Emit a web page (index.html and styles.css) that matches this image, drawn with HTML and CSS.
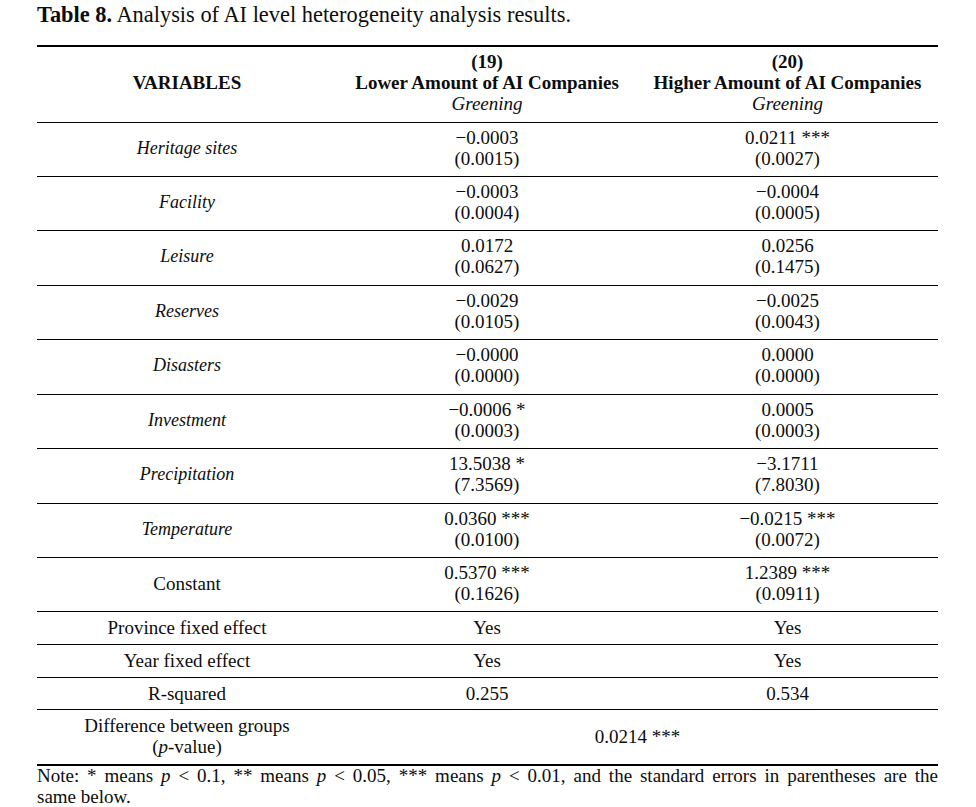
FILE: index.html
```html
<!DOCTYPE html>
<html lang="en">
<head>
<meta charset="utf-8">
<title>Table 8</title>
<link rel="stylesheet" href="styles.css">
</head>
<body>
<div class="page">
  <p class="caption"><b>Table 8.</b> Analysis of AI level heterogeneity analysis results.</p>
  <table class="results">
    <colgroup><col class="c1"><col class="c2"><col class="c3"></colgroup>
    <thead>
      <tr>
        <th class="var">VARIABLES</th>
        <th>(19)<br>Lower Amount of AI Companies<br><i class="dep">Greening</i></th>
        <th>(20)<br>Higher Amount of AI Companies<br><i class="dep">Greening</i></th>
      </tr>
    </thead>
    <tbody>
      <tr class="pair"><td class="lab">Heritage sites</td><td>−0.0003<br>(0.0015)</td><td>0.0211 ***<br>(0.0027)</td></tr>
      <tr class="pair"><td class="lab">Facility</td><td>−0.0003<br>(0.0004)</td><td>−0.0004<br>(0.0005)</td></tr>
      <tr class="pair tall"><td class="lab">Leisure</td><td>0.0172<br>(0.0627)</td><td>0.0256<br>(0.1475)</td></tr>
      <tr class="pair"><td class="lab">Reserves</td><td>−0.0029<br>(0.0105)</td><td>−0.0025<br>(0.0043)</td></tr>
      <tr class="pair tall"><td class="lab">Disasters</td><td>−0.0000<br>(0.0000)</td><td>0.0000<br>(0.0000)</td></tr>
      <tr class="pair"><td class="lab">Investment</td><td>−0.0006 *<br>(0.0003)</td><td>0.0005<br>(0.0003)</td></tr>
      <tr class="pair tall"><td class="lab">Precipitation</td><td>13.5038 *<br>(7.3569)</td><td>−3.1711<br>(7.8030)</td></tr>
      <tr class="pair"><td class="lab">Temperature</td><td>0.0360 ***<br>(0.0100)</td><td>−0.0215 ***<br>(0.0072)</td></tr>
      <tr class="pair"><td>Constant</td><td>0.5370 ***<br>(0.1626)</td><td>1.2389 ***<br>(0.0911)</td></tr>
      <tr class="single"><td>Province fixed effect</td><td>Yes</td><td>Yes</td></tr>
      <tr class="single"><td>Year fixed effect</td><td>Yes</td><td>Yes</td></tr>
      <tr class="single short"><td>R-squared</td><td>0.255</td><td>0.534</td></tr>
      <tr class="diff"><td>Difference between groups<br>(<i>p</i>-value)</td><td colspan="2">0.0214 ***</td></tr>
    </tbody>
  </table>
  <div class="note">
    <span class="note-line">Note: * means <i>p</i> &lt; 0.1, ** means <i>p</i> &lt; 0.05, *** means <i>p</i> &lt; 0.01, and the standard errors in parentheses are the</span>
    <span class="note-last">same below.</span>
  </div>
</div>
</body>
</html>
```
FILE: styles.css
```css
html, body {
  margin: 0;
  padding: 0;
  background: #ffffff;
}

.page {
  width: 901px;
  padding-left: 37px;
  font-family: "Liberation Serif", "Times New Roman", serif;
  color: #0d0d0d;
}

.caption {
  margin: 0 0 17px 0;
  padding-top: 2px;
  font-size: 22.4px;
  line-height: 26px;
  white-space: nowrap;
}

.results {
  width: 901px;
  border-collapse: separate;
  border-spacing: 0;
  border-top: 2px solid #000;
  table-layout: fixed;
  font-size: 19px;
}

.c1, .c2 { width: 300px; }
.c3 { width: 301px; }

.results th,
.results td {
  text-align: center;
  vertical-align: middle;
  padding: 0;
  border-bottom: 1px solid #000;
  line-height: 21px;
}

.results th {
  font-weight: bold;
  padding: 4px 0 8px;
}

.results th .dep {
  font-weight: normal;
}

.results .lab {
  font-style: italic;
  font-size: 18px;
}

.pair td { padding: 4px 0 7px; }
.pair.tall td { padding-bottom: 8px; }

.single td { padding: 5px 0 6px; }
.single.short td { padding-bottom: 5px; }

.diff td {
  padding: 5px 0 7px;
  border-bottom: 2px solid #000;
}

.note {
  font-size: 19px;
  line-height: 19px;
}

.note-line {
  display: block;
  text-align: justify;
  text-align-last: justify;
}

.note-last {
  display: block;
  margin-top: 2px;
}
```
